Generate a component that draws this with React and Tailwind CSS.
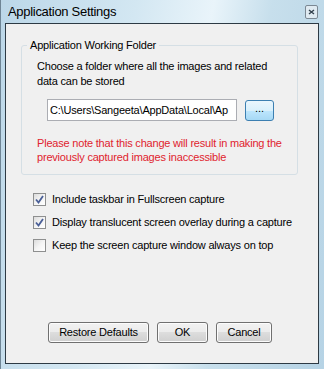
import { useState } from 'react'

const font = { fontFamily: '"Liberation Sans", Arial, sans-serif' }

const Check = ({ checked, label, onChange }) => (
  <label className="flex items-center gap-[6px] h-[14px] cursor-default">
    <span
      onClick={onChange}
      className="w-[13px] h-[13px] border border-[#8e8f8f] bg-gradient-to-br from-[#dcdcdc] via-[#f4f4f4] to-[#ffffff] flex items-center justify-center shrink-0"
    >
      {checked && (
        <svg width="9" height="9" viewBox="0 0 9 9">
          <path d="M1 4.5 L3.5 7.5 L8 1" fill="none" stroke="#4a5f97" strokeWidth="1.8" />
        </svg>
      )}
    </span>
    <span className="text-[11px] tracking-[-0.2px] text-black leading-none">{label}</span>
  </label>
)

const Button = ({ children, className }) => (
  <button
    className={`h-[21px] rounded-[3px] border border-[#707070] text-[11px] tracking-[-0.2px] text-black bg-[linear-gradient(#f2f2f2_0%,#ebebeb_50%,#dddddd_50%,#cfcfcf_100%)] shadow-[inset_0_0_0_1px_#fcfcfc] ${className}`}
  >
    {children}
  </button>
)

const App = () => {
  const [opts, setOpts] = useState([true, true, false])
  const toggle = (i) => setOpts(opts.map((v, j) => (j === i ? !v : v)))

  return (
    <div
      className="w-[324px] h-[369px] bg-[linear-gradient(100deg,#bcd7e8_0%,#d3e7f2_35%,#e9f4fa_55%,#c7dfec_70%,#b6d3e5_100%)] flex flex-col border-l border-[#6f8595]"
      style={font}
    >
      {/* Title bar */}
      <div className="h-[23px] flex items-center justify-between pl-[7px] pr-[6px] shrink-0">
        <span className="text-[13px] tracking-[-0.3px] text-black">Application Settings</span>
        <span className="w-[13px] h-[14px] mt-[1px] border border-[#7b8893] rounded-[2px] flex items-center justify-center bg-[#dfeaf1]">
          <svg width="7" height="6" viewBox="0 0 7 6">
            <path d="M1 1 L6 5 M6 1 L1 5" stroke="#33414d" strokeWidth="1.4" />
          </svg>
        </span>
      </div>

      {/* Client area */}
      <div className="ml-[4px] w-[314px] h-[341px] border border-[#2d3a44] bg-[#f0f0f0] flex flex-col pt-[14px] pl-[15px] pr-[20px]">
        <fieldset className="border border-[#d5dfe5] rounded-[3px] px-[15px] pb-[10px]">
          <legend className="px-[3px] -ml-[10px] text-[11px] tracking-[-0.2px] leading-[14px] text-black">
            Application Working Folder
          </legend>
          <p className="text-[11px] tracking-[-0.2px] leading-[15px] text-black mt-[7px]">
            Choose a folder where all the images and related data can be stored
          </p>
          <div className="flex items-center gap-[8px] mt-[10px] ml-[10px]">
            <div className="w-[190px] h-[22px] border border-[#abadb3] bg-white flex items-center px-[2px] overflow-hidden whitespace-nowrap text-[11px] tracking-[-0.2px] text-black">
              C:\Users\Sangeeta\AppData\Local\Ap
            </div>
            <button className="w-[29px] h-[21px] rounded-[3px] border border-[#3c7fb1] text-[11px] text-black bg-[linear-gradient(#eaf6fd_0%,#d9f0fc_50%,#bee6fd_50%,#a7d9f5_100%)] leading-none pb-[3px]">
              ...
            </button>
          </div>
          <p className="text-[11px] tracking-[-0.2px] leading-[14px] text-[#e0232e] mt-[15px]">
            Please note that this change will result in making the previously captured images inaccessible
          </p>
        </fieldset>

        <div className="flex flex-col gap-[9px] mt-[17px] pl-[12px]">
          <Check checked={opts[0]} onChange={() => toggle(0)} label="Include taskbar in Fullscreen capture" />
          <Check checked={opts[1]} onChange={() => toggle(1)} label="Display translucent screen overlay during a capture" />
          <Check checked={opts[2]} onChange={() => toggle(2)} label="Keep the screen capture window always on top" />
        </div>

        <div className="flex-1" />
        <div className="flex items-center gap-[8px] pl-[27px] pb-[20px]">
          <Button className="w-[101px]">Restore Defaults</Button>
          <Button className="w-[51px]">OK</Button>
          <Button className="w-[56px]">Cancel</Button>
        </div>
      </div>
    </div>
  )
}

export default App
